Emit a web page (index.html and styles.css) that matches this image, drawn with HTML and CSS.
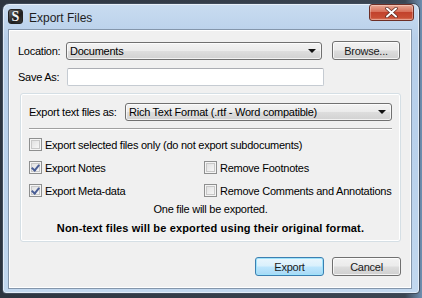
FILE: index.html
```html
<!DOCTYPE html>
<html lang="en">
<head>
  <meta charset="UTF-8">
  <title>Export Files</title>
  <link rel="stylesheet" href="styles.css">
</head>
<body>
  <div class="window">
    <div class="titlebar">
      <div class="app-icon"><span>S</span></div>
      <div class="title">Export Files</div>
      <div class="close-btn">
        <svg width="13" height="11" viewBox="0 0 13 11">
          <path d="M2 1.5 L11 9.5 M11 1.5 L2 9.5" stroke="#5a2a22" stroke-width="3.4" stroke-linecap="round"/>
          <path d="M2 1.5 L11 9.5 M11 1.5 L2 9.5" stroke="#ffffff" stroke-width="2" stroke-linecap="round"/>
        </svg>
      </div>
    </div>

    <div class="client">
      <div class="row">
        <label class="lbl lbl-loc">Location:</label>
        <div class="combo combo-loc"><span>Documents</span><span class="arrow"></span></div>
        <div class="btn btn-browse">Browse...</div>
      </div>

      <div class="row row-save">
        <label class="lbl lbl-save">Save As:</label>
        <div class="textbox"></div>
      </div>

      <div class="group">
        <div class="row">
          <label class="lbl lbl-fmt">Export text files as:</label>
          <div class="combo combo-fmt"><span>Rich Text Format (.rtf - Word compatible)</span><span class="arrow"></span></div>
        </div>

        <div class="separator"></div>

        <div class="checks">
          <div class="check wide"><span class="box"></span>Export selected files only (do not export subdocuments)</div>
          <div class="check-row">
            <div class="check col"><span class="box checked"></span>Export Notes</div>
            <div class="check"><span class="box"></span>Remove Footnotes</div>
          </div>
          <div class="check-row">
            <div class="check col"><span class="box checked"></span>Export Meta-data</div>
            <div class="check"><span class="box"></span>Remove Comments and Annotations</div>
          </div>
        </div>

        <p class="note">One file will be exported.</p>
        <p class="note bold">Non-text files will be exported using their original format.</p>
      </div>

      <div class="buttons">
        <div class="btn btn-default">Export</div>
        <div class="btn">Cancel</div>
      </div>
    </div>
  </div>
</body>
</html>
```

FILE: styles.css
```css
html, body {
  margin: 0;
  padding: 0;
  width: 422px;
  height: 298px;
  overflow: hidden;
  background: linear-gradient(90deg, #2d3540 0%, #3b4552 96%, #6f8fb0 100%);
  font-family: 'Liberation Sans', Arial, sans-serif;
  font-size: 11px;
  letter-spacing: -0.25px;
  color: #000;
}
.window {
  margin: 3px 2px 0 2px;
  height: 291px;
  box-sizing: border-box;
  border: 1px solid #3f4b5a;
  border-radius: 7px 7px 4px 4px;
  background: linear-gradient(180deg, #c9dcf0 0%, #b7cfea 12%, #bad2ec 60%, #c2d8ef 100%);
  padding: 0 7px 0 5px;
  box-shadow: inset 0 0 0 1px rgba(255,255,255,0.55);
}
.titlebar {
  height: 25px;
  display: flex;
  align-items: flex-start;
}
.app-icon {
  width: 15px;
  height: 15px;
  margin-top: 5px;
  border-radius: 3px;
  background: linear-gradient(135deg, #6b6b6b 0%, #1d1d1d 60%, #3a3a3a 100%);
  border: 1px solid #222;
  box-sizing: border-box;
  display: flex;
  align-items: center;
  justify-content: center;
}
.app-icon span {
  color: #f4f4f4;
  font-family: 'Liberation Serif', serif;
  font-size: 14px;
  font-weight: bold;
  letter-spacing: 0;
  line-height: 1;
}
.title {
  margin: 6px 0 0 6px;
  font-family: 'Liberation Sans', sans-serif;
  font-size: 12px;
  letter-spacing: 0;
  color: #1e1e1e;
  line-height: 16px;
}
.close-btn {
  margin-left: auto;
  margin-right: -2px;
  width: 45px;
  height: 17px;
  box-sizing: border-box;
  border: 1px solid #6d2f26;
  border-radius: 3px;
  background: linear-gradient(180deg, #e9a894 0%, #d7705a 45%, #c2422c 50%, #c84f35 85%, #e0846a 100%);
  display: flex;
  align-items: center;
  justify-content: center;
  box-shadow: inset 0 0 0 1px rgba(255,255,255,0.3);
}
.client {
  height: 260px;
  box-sizing: border-box;
  border: 1px solid #8496ab;
  background: #f0f0f0;
  padding: 11px 10px 0 9px;
  box-shadow: inset 0 0 0 1px #ffffff;
}
.row {
  display: flex;
  align-items: center;
}
.lbl {
  flex-shrink: 0;
}
.lbl-loc { width: 48px; }
.lbl-save { width: 49px; }
.lbl-fmt { width: 96px; }
.row-save {
  margin-top: 8px;
}
.combo {
  height: 18px;
  box-sizing: border-box;
  border: 1px solid #707070;
  border-radius: 3px;
  background: linear-gradient(180deg, #f3f3f3 0%, #ebebeb 48%, #dddddd 52%, #d1d1d1 100%);
  display: flex;
  align-items: center;
  justify-content: space-between;
  padding: 0 5px 0 3px;
  box-shadow: inset 0 0 0 1px rgba(255,255,255,0.7);
}
.combo-loc { width: 256px; }
.combo-fmt { width: 267px; }
.arrow {
  width: 0;
  height: 0;
  border-left: 4px solid transparent;
  border-right: 4px solid transparent;
  border-top: 4px solid #111;
}
.btn {
  height: 19px;
  width: 69px;
  box-sizing: border-box;
  border: 1px solid #707070;
  border-radius: 3px;
  background: linear-gradient(180deg, #f2f2f2 0%, #ebebeb 48%, #dddddd 52%, #cfcfcf 100%);
  box-shadow: inset 0 0 0 1px rgba(255,255,255,0.75);
  display: flex;
  align-items: center;
  justify-content: center;
  color: #1a1a1a;
}
.btn-browse {
  width: 68px;
  margin-left: 10px;
}
.btn-default {
  border-color: #3c7fb1;
  background: linear-gradient(180deg, #eaf6fd 0%, #d9f0fc 48%, #bee6fd 52%, #a7d9f5 100%);
  box-shadow: inset 0 0 0 1px #9ee3fb;
}
.textbox {
  width: 257px;
  height: 18px;
  box-sizing: border-box;
  border: 1px solid #c5cbd2;
  border-top-color: #abadb3;
  border-radius: 2px;
  background: #fff;
}
.group {
  width: 381px;
  height: 149px;
  box-sizing: border-box;
  margin: 7px 0 0 2px;
  border: 1px solid #d5dfe5;
  border-radius: 3px;
  box-shadow: inset 0 0 0 1px #ffffff;
  padding: 9px 8px 0 8px;
}
.separator {
  margin-top: 7px;
  height: 1px;
  background: #a0a0a0;
  border-bottom: 1px solid #ffffff;
}
.checks {
  margin-top: 8px;
  display: flex;
  flex-direction: column;
  gap: 10px;
}
.check-row {
  display: flex;
}
.check {
  display: flex;
  align-items: center;
  height: 13px;
  white-space: nowrap;
}
.check.col {
  width: 175px;
}
.box {
  width: 13px;
  height: 13px;
  box-sizing: border-box;
  border: 1px solid #8e8f8f;
  background: linear-gradient(135deg, #dcdcdc 0%, #f2f2f2 70%, #ffffff 100%);
  box-shadow: inset 0 0 0 1px #f4f4f4, inset 0 0 0 2px #c8c8c8;
  margin-right: 3px;
  position: relative;
}
.box.checked::after {
  content: "";
  position: absolute;
  left: 3px;
  top: 1px;
  width: 3px;
  height: 6px;
  border-right: 2px solid #4a5e96;
  border-bottom: 2px solid #4a5e96;
  transform: rotate(40deg);
}
.note {
  margin: 6px 0 0 0;
  text-align: center;
  line-height: 13px;
}
.note.bold {
  font-weight: bold;
  letter-spacing: 0.15px;
}
.buttons {
  display: flex;
  justify-content: flex-end;
  gap: 8px;
  margin-top: 15px;
}
```
